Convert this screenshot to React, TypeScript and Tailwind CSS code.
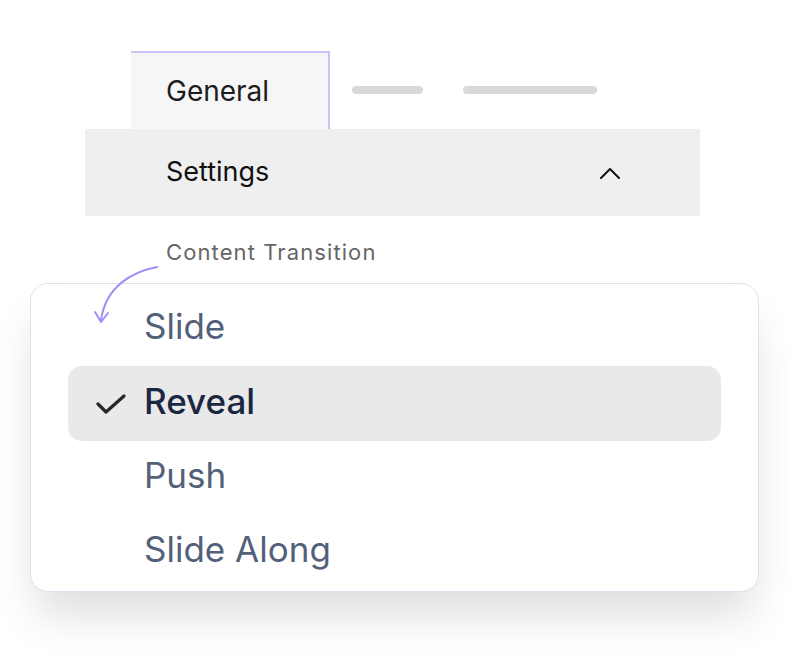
const items = ['Slide', 'Reveal', 'Push', 'Slide Along'];

function ChevronUp() {
  return (
    <svg width="22" height="12" viewBox="0 0 22 12" fill="none">
      <path d="M2 11 L11 2 L20 11" stroke="#111" strokeWidth="2" strokeLinecap="round" strokeLinejoin="round" />
    </svg>
  );
}

function Check() {
  return (
    <svg width="30" height="22" viewBox="0 0 30 22" fill="none">
      <path d="M2 11 L10 19 L28 3" stroke="#262626" strokeWidth="3.2" strokeLinecap="round" strokeLinejoin="round" />
    </svg>
  );
}

function CurvedArrow() {
  return (
    <svg width="70" height="70" viewBox="0 0 70 70" fill="none" className="absolute left-[61px] top-[-20px]">
      <path d="M65 3 C40 8 14 22 9 56" stroke="#a18ff5" strokeWidth="2" strokeLinecap="round" fill="none" />
      <path d="M3 48 L9 58 L16 49" stroke="#a18ff5" strokeWidth="2" strokeLinecap="round" strokeLinejoin="round" fill="none" />
    </svg>
  );
}

export default function App() {
  return (
    <div className="h-[660px] w-[788px] bg-white pt-[51px] font-['Inter',sans-serif]">
      <div className="ml-[131px] flex items-center">
        <div className="flex h-[78px] w-[199px] items-center border-t-2 border-r-2 border-[#cbc2fb] bg-[#f6f6f6] pl-[35px] text-[28px] text-[#1d1d1f]">
          General
        </div>
        <div className="ml-[22px] h-[8px] w-[71px] rounded-full bg-[#d9d9d9]" />
        <div className="ml-[40px] h-[8px] w-[134px] rounded-full bg-[#d9d9d9]" />
      </div>
      <div className="ml-[85px] flex h-[87px] w-[615px] items-center justify-between bg-[#efefef] pl-[81px] pr-[79px]">
        <span className="text-[27px] text-[#111]">Settings</span>
        <ChevronUp />
      </div>
      <div className="ml-[166px] mt-[24px] text-[22px] leading-[24px] tracking-[1.1px] text-[#666]">Content Transition</div>
      <div className="relative ml-[30px] mt-[19px] w-[729px] rounded-[18px] border border-[#dde2ee] bg-white pb-[2px] pt-[8px] shadow-[0_30px_44px_-6px_rgba(0,0,0,0.13)]">
        <CurvedArrow />
        <div className="px-[37px]">
          {items.map((item) => {
            const selected = item === 'Reveal';
            return (
              <div
                key={item}
                className={
                  selected
                    ? 'flex h-[75px] items-center rounded-[14px] bg-[#e9e9e9] pb-[5px] pl-[28px] text-[35px] font-medium text-[#1a2740]'
                    : 'flex h-[74px] items-center pb-[5px] pl-[76px] text-[35px] text-[#536079]'
                }
              >
                {selected && (
                  <span className="mr-[18px] flex w-[30px] pt-[5px]">
                    <Check />
                  </span>
                )}
                {item}
              </div>
            );
          })}
        </div>
      </div>
    </div>
  );
}
